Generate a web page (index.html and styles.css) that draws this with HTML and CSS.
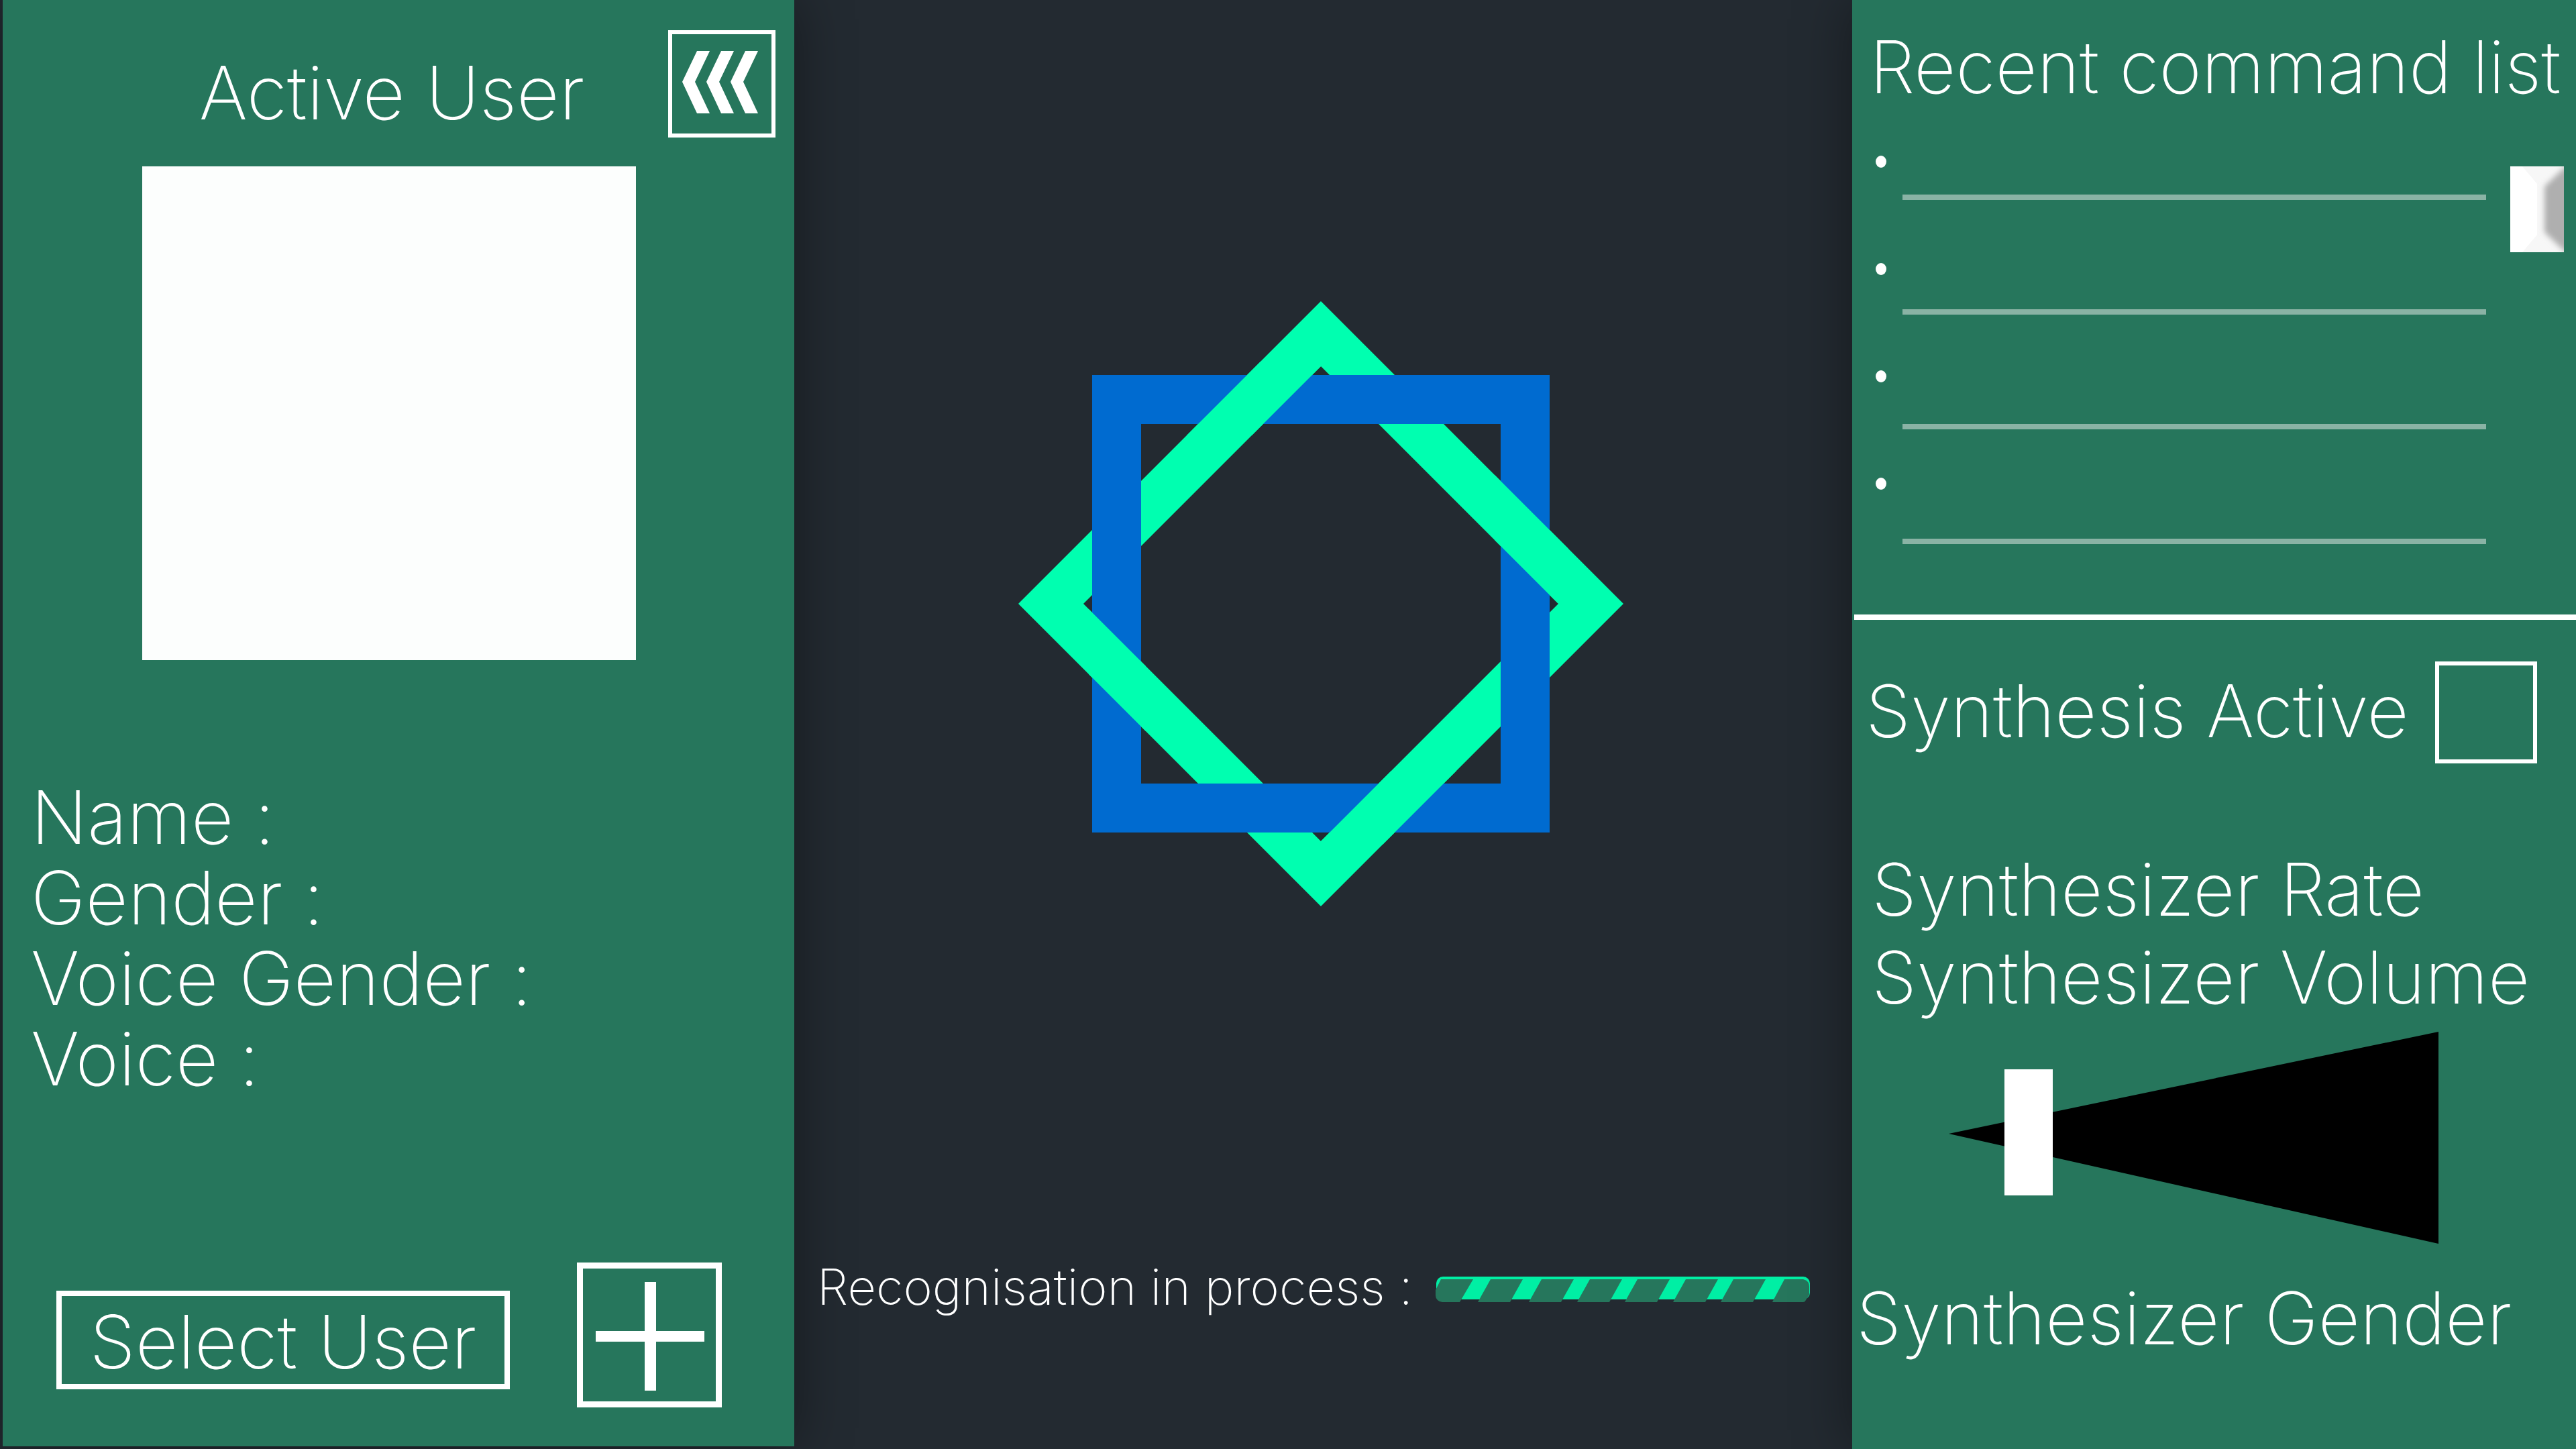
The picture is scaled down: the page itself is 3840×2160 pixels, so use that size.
FILE: index.html
```html
<!DOCTYPE html>
<html lang="en">
<head>
<meta charset="utf-8">
<meta name="viewport" content="width=device-width, initial-scale=1">
<title>Voice assistant</title>
<link rel="stylesheet" href="styles.css">
</head>
<body>
<div class="app">
  <aside class="panel panel-user">
    <header class="user-header">
      <h1 class="user-title">Active User</h1>
      <button class="icon-button collapse" type="button" aria-label="Collapse panel">
        <svg viewBox="0 0 160 160" aria-hidden="true">
          <path d="M43 31h19L40 77l22 47H43L21 77z"/>
          <path d="M79 31h19L76 77l22 47H79L57 77z"/>
          <path d="M115 31h19l-22 46 22 47h-19L93 77z"/>
        </svg>
      </button>
    </header>
    <div class="photo" role="img" aria-label="User photo"></div>
    <ul class="details">
      <li>Name :</li>
      <li>Gender :</li>
      <li>Voice Gender :</li>
      <li>Voice :</li>
    </ul>
    <div class="user-actions">
      <button class="select-user" type="button">Select User</button>
      <button class="icon-button add" type="button" aria-label="Add user">
        <svg viewBox="0 0 216 216" aria-hidden="true">
          <path d="M28 102h73V29h17v73h72v16h-72v73h-17v-73H28z"/>
        </svg>
      </button>
    </div>
  </aside>

  <main class="stage">
    <svg class="emblem" viewBox="0 0 902 902" aria-hidden="true">
      <defs>
        <path id="diamond" fill-rule="evenodd" d="M451 0L902 451 451 902 0 451zM451 97L97 451 451 805 805 451z"/>
        <clipPath id="over">
          <path d="M160 90h291v110H160zM710 220h110v230H710zM105 451h85v230h-85zM451 700h260v110H451z"/>
        </clipPath>
      </defs>
      <use class="emblem-green" href="#diamond"/>
      <path class="emblem-blue" fill-rule="evenodd" d="M110 110h682v682H110zM183 183v536h536V183z"/>
      <use class="emblem-green" href="#diamond" clip-path="url(#over)"/>
    </svg>
    <div class="status">
      <span id="status-label">Recognisation in process :</span>
      <div class="progress" role="progressbar" aria-labelledby="status-label">
        <svg viewBox="0 0 558 38" aria-hidden="true">
          <defs>
            <clipPath id="bar"><rect width="558" height="38" rx="10"/></clipPath>
          </defs>
          <rect class="bar-fill" x="1" width="557" height="34" rx="10"/>
          <g class="bar-stripes" clip-path="url(#bar)">
            <path d="M8 4h48L36 38H0V20z"/>
            <path d="M82 4h48l-19 34H63z"/>
            <path d="M158 4h48l-19 34h-48z"/>
            <path d="M230 4h48l-19 34h-48z"/>
            <path d="M301 4h48l-19 34h-48z"/>
            <path d="M373 4h48l-19 34h-48z"/>
            <path d="M444 4h48l-19 34h-48z"/>
            <path d="M520 4h28q9 2 9 11v12l-7 11h-48z"/>
          </g>
        </svg>
      </div>
    </div>
  </main>

  <aside class="panel panel-settings">
    <h2 class="commands-title">Recent command list</h2>
    <div class="commands">
      <div class="bullets" aria-hidden="true"><i></i><i></i><i></i><i></i></div>
      <ul class="lines"><li></li><li></li><li></li><li></li></ul>
      <svg class="scroll-thumb" viewBox="0 0 80 128" aria-hidden="true">
        <defs>
          <filter id="soft" x="-50%" y="-50%" width="200%" height="200%"><feGaussianBlur stdDeviation="4"/></filter>
        </defs>
        <rect width="80" height="128" fill="#fff"/>
        <path d="M18 0h62v128H18l22-26V26z" fill="#f7f7f7"/>
        <path d="M110-26L51 30v68l59 56z" fill="#afafaf" filter="url(#soft)"/>
      </svg>
    </div>
    <hr class="divider">
    <div class="synthesis">
      <label for="synthesis-active">Synthesis Active</label>
      <input class="checkbox" id="synthesis-active" type="checkbox">
    </div>
    <p class="setting">Synthesizer Rate</p>
    <label class="setting setting-volume" for="volume">Synthesizer Volume</label>
    <div class="volume">
      <svg class="volume-wedge" viewBox="0 0 730 316" preserveAspectRatio="none" aria-hidden="true">
        <path d="M0 152L730 0v316z"/>
      </svg>
      <input class="volume-range" id="volume" type="range" min="0" max="100" step="any" value="12.6">
    </div>
    <p class="setting setting-gender">Synthesizer Gender</p>
  </aside>
</div>
</body>
</html>
```
FILE: styles.css
```css
:root {
  --green: #26765c;
  --dark: #232a31;
  --mint: #00ffb0;
  --blue: #006bd0;
}

* {
  box-sizing: border-box;
  margin: 0;
  padding: 0;
}

body {
  background: var(--dark);
  color: #fff;
  font: 200 110px/120px Inter, "Liberation Sans", sans-serif;
}

button,
input {
  font: inherit;
  color: inherit;
  background: none;
}

ul {
  list-style: none;
}

.app {
  display: grid;
  grid-template-columns: 1180fr 1577fr 1079fr;
  min-height: 100vh;
  padding-left: 4px;
  overflow: hidden;
}

.panel {
  display: flex;
  flex-direction: column;
  min-width: 0;
  background: var(--green);
  box-shadow: 0 0 80px rgba(0, 0, 0, 0.4);
  white-space: nowrap;
}

/* Active user */

.panel-user {
  margin-bottom: 4px;
  padding-bottom: 58px;
}

.user-header {
  display: flex;
  align-items: flex-start;
  padding: 45px 28px 0 168px;
}

.user-title {
  flex: 1;
  margin-top: 33px;
  font-size: 110px;
  font-weight: 200;
  text-align: center;
}

.icon-button {
  flex: none;
  border: 0;
  outline-style: solid;
  outline-color: #fff;
}

.icon-button svg {
  display: block;
  fill: #fff;
}

.collapse {
  width: 160px;
  height: 160px;
  outline-width: 6px;
  outline-offset: -6px;
}

.add {
  width: 216px;
  height: 216px;
  outline-width: 9px;
  outline-offset: -9px;
}

.photo {
  width: 736px;
  max-width: 100%;
  aspect-ratio: 1;
  margin: 43px 0 0 208px;
  background: #fcfefd;
}

.details {
  margin-top: 174px;
  padding-left: 42px;
}

.user-actions {
  display: flex;
  align-items: flex-end;
  gap: 100px;
  margin-top: auto;
  padding-left: 80px;
}

.select-user {
  width: 676px;
  height: 147px;
  margin-bottom: 27px;
  padding-top: 4px;
  border: 8px solid #fff;
}

/* Emblem and status */

.stage {
  display: flex;
  flex-direction: column;
  align-items: center;
  min-width: 0;
  padding-top: 449px;
}

.emblem {
  width: 902px;
  height: 902px;
  margin-right: 8px;
}

.emblem-green {
  fill: var(--mint);
}

.emblem-blue {
  fill: var(--blue);
}

.status {
  display: flex;
  align-items: center;
  justify-content: space-between;
  align-self: stretch;
  margin-top: auto;
  padding: 0 63px 197px 34px;
  font-size: 74px;
  line-height: 90px;
  white-space: nowrap;
}

.progress {
  width: 558px;
  margin-top: 8px;
}

.progress svg {
  display: block;
}

.bar-fill {
  fill: #00efa4;
}

.bar-stripes {
  fill: var(--green);
}

/* Commands */

.panel-settings {
  font-size: 108px;
}

.commands-title {
  padding: 40px 0 0 26px;
  font-size: 108px;
  font-weight: 200;
}

.commands {
  display: grid;
  grid-template-columns: 16px 1fr 80px;
  align-items: start;
  padding: 0 18px 0 35px;
}

.bullets {
  display: grid;
  gap: 142px;
  padding-top: 72px;
}

.bullets i {
  height: 18px;
  border-radius: 50%;
  background: #fff;
}

.lines {
  display: grid;
  gap: 163px;
  margin: 0 36px 0 24px;
  padding-top: 130px;
}

.lines li {
  height: 8px;
  background: #8ab3a5;
}

.scroll-thumb {
  width: 80px;
  height: 128px;
  margin-top: 88px;
}

.divider {
  height: 8px;
  margin: 105px 0 0 3px;
  border: 0;
  background: #fff;
}

/* Synthesizer settings */

.synthesis {
  display: flex;
  align-items: flex-start;
  justify-content: space-between;
  padding: 62px 58px 128px 20px;
}

.synthesis label {
  margin-top: 14px;
}

.checkbox {
  appearance: none;
  flex: none;
  width: 152px;
  height: 152px;
  border: 6px solid #fff;
}

.checkbox:checked {
  background: #fff;
}

.setting {
  padding-left: 29px;
}

.setting-volume {
  margin-top: 11px;
}

.setting-gender {
  margin-top: 51px;
  padding-left: 6px;
}

.volume {
  display: grid;
  align-items: start;
  margin: 21px 205px 0 144px;
}

.volume-wedge,
.volume-range {
  grid-area: 1 / 1;
  width: 100%;
}

.volume-wedge {
  height: 316px;
}

.volume-range {
  appearance: none;
  height: 300px;
}

.volume-range::-webkit-slider-thumb {
  appearance: none;
  width: 72px;
  height: 188px;
  background: #fff;
}

.volume-range::-moz-range-thumb {
  width: 72px;
  height: 188px;
  border: 0;
  border-radius: 0;
  background: #fff;
}
```
